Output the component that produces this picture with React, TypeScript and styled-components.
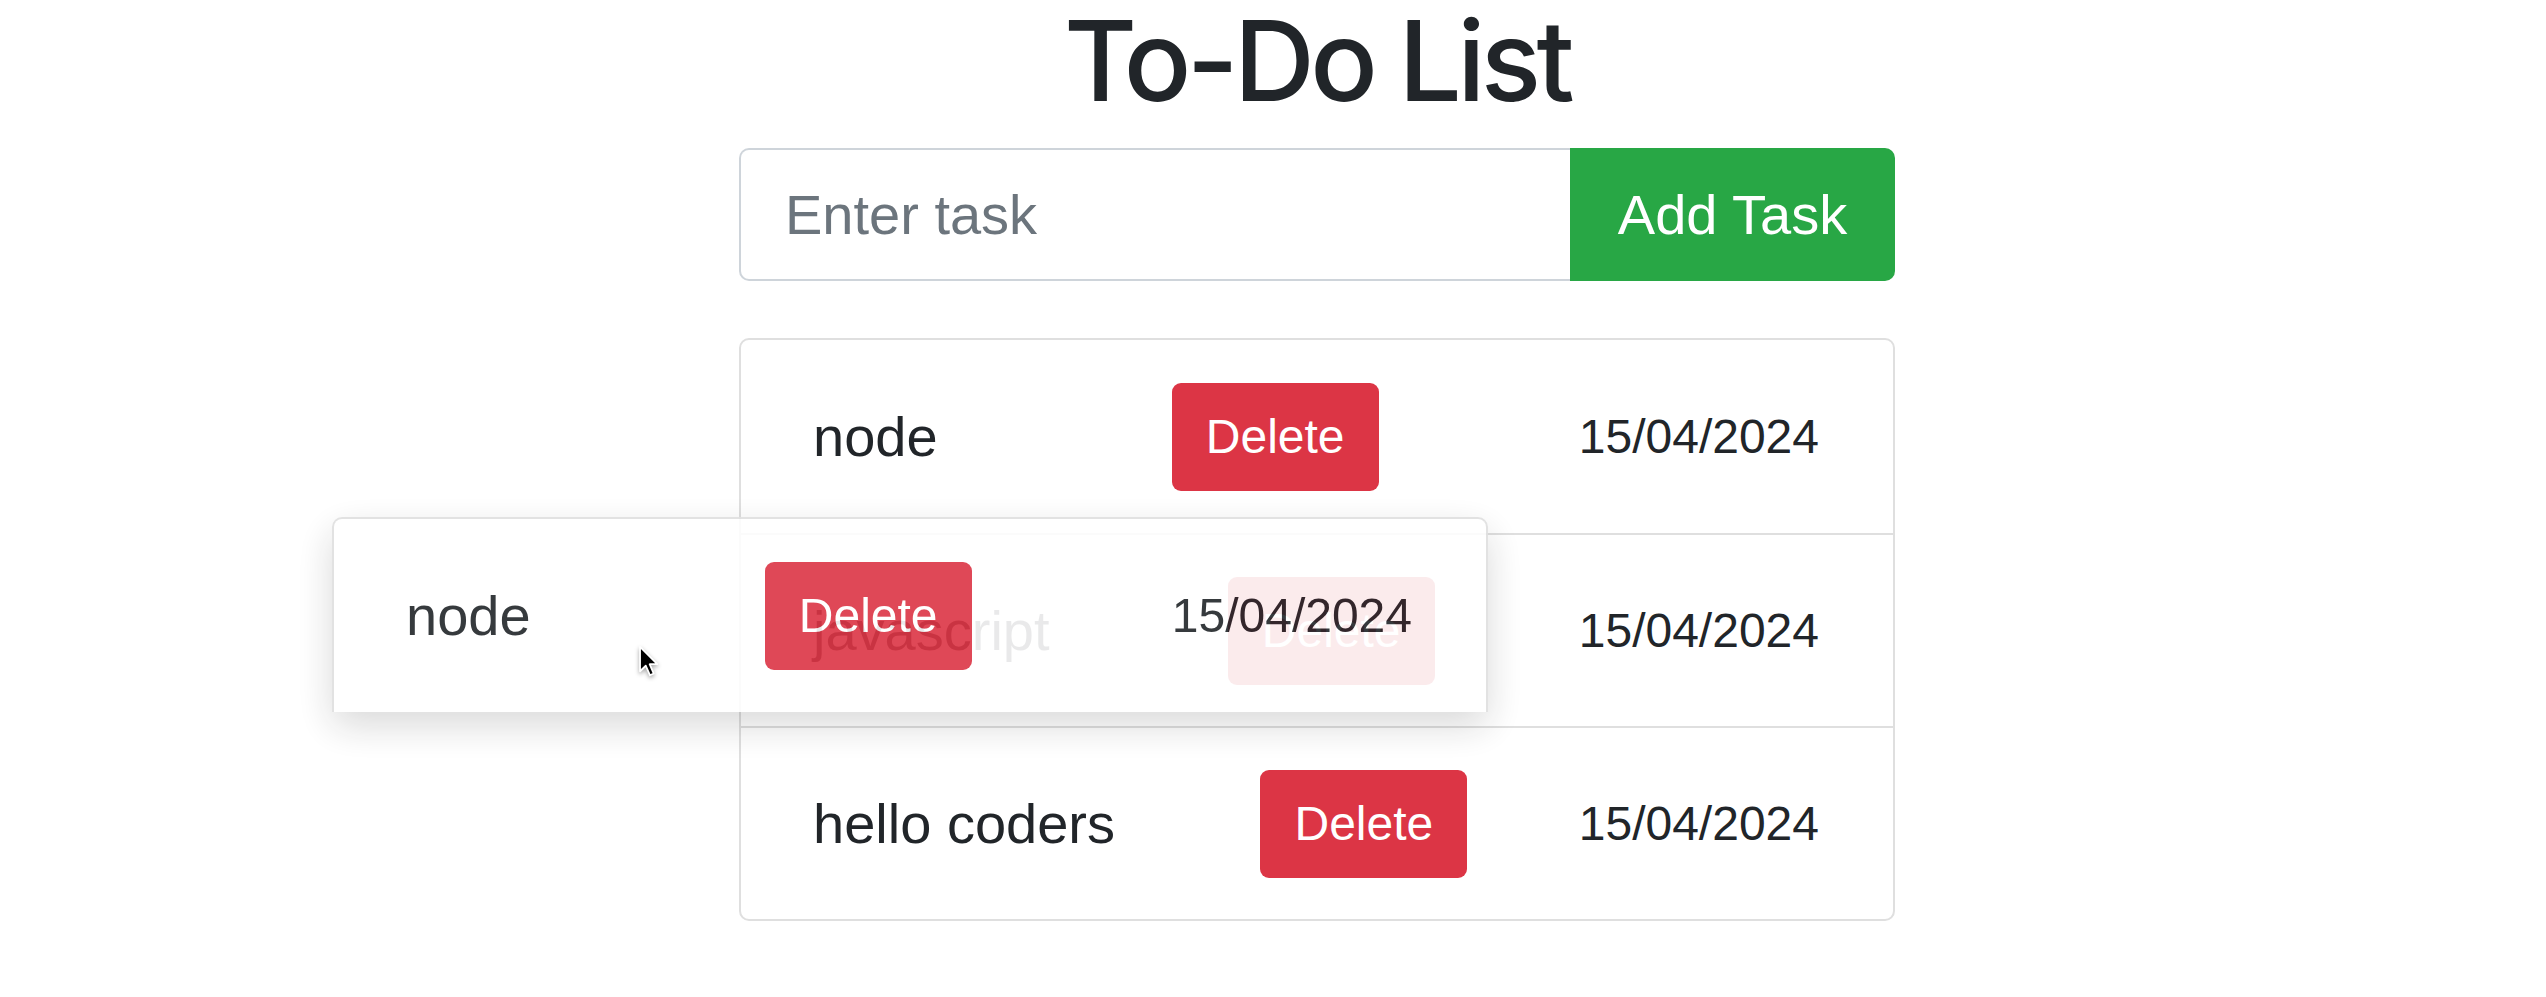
import React from "react";
import styled, { createGlobalStyle } from "styled-components";

interface TaskType {
  id: number;
  text: string;
  date: string;
}

const tasks: TaskType[] = [
  { id: 1, text: "node", date: "15/04/2024" },
  { id: 2, text: "javascript", date: "15/04/2024" },
  { id: 3, text: "hello coders", date: "15/04/2024" },
];

const GlobalStyle = createGlobalStyle`
  * {
    box-sizing: border-box;
  }
  body {
    margin: 0;
    background: #ffffff;
    color: #212529;
    font-family: "Liberation Sans", Arial, sans-serif;
  }
`;

const Page = styled.div`
  position: relative;
  min-height: 997px;
  overflow: hidden;
`;

const Container = styled.div`
  width: 1156px;
  margin-left: 739px;
  display: flex;
  flex-direction: column;
`;

const Title = styled.h1`
  margin: 0;
  padding-top: 4px;
  font-family: Inter, "Liberation Sans", sans-serif;
  font-size: 112px;
  line-height: 112px;
  font-weight: 500;
  letter-spacing: -4.6px;
  text-align: center;
  color: #212529;
`;

// 입력창 + 추가 버튼
const InputGroup = styled.div`
  display: flex;
  height: 133px;
  margin-top: 32px;
`;

const TaskInput = styled.input`
  flex: 1;
  height: 100%;
  padding: 0 44px;
  border: 2px solid #ced4da;
  border-right: none;
  border-radius: 10px 0 0 10px;
  font-family: inherit;
  font-size: 56px;
  color: #495057;
  outline: none;

  &::placeholder {
    color: #6c757d;
  }
`;

const AddButton = styled.button`
  width: 325px;
  height: 100%;
  border: none;
  border-radius: 0 10px 10px 0;
  background-color: #28a745;
  color: #ffffff;
  font-family: inherit;
  font-size: 56px;
`;

const List = styled.ul`
  list-style: none;
  margin: 57px 0 0;
  padding: 0;
  border: 2px solid #dfdfdf;
  border-radius: 10px;
`;

const Item = styled.li`
  display: flex;
  align-items: center;
  justify-content: space-between;
  height: 193px;
  padding: 0 74px 0 72px;

  & + & {
    border-top: 2px solid #dfdfdf;
  }
`;

const TaskText = styled.span`
  font-size: 56px;
  color: #212529;
`;

const DeleteButton = styled.button`
  margin-left: 34px;
  padding: 18px 34px;
  border: none;
  border-radius: 9px;
  background-color: #dc3545;
  color: #ffffff;
  font-family: inherit;
  font-size: 48px;
  line-height: 72px;
`;

const DateText = styled.span`
  font-size: 48px;
  color: #212529;
`;

// 드래그 중인 아이템 미리보기
const DragPreview = styled.div`
  position: absolute;
  left: 332px;
  top: 517px;
  width: 1156px;
  opacity: 0.9;
  background: #ffffff;
  border: 2px solid #dfdfdf;
  border-bottom: none;
  border-radius: 10px 10px 0 0;
  box-shadow: 0 14px 38px rgba(0, 0, 0, 0.17);
`;

const Cursor = styled.svg`
  position: absolute;
  left: 638px;
  top: 645px;
  width: 22px;
  height: 32px;
  filter: drop-shadow(0 2px 2px rgba(0, 0, 0, 0.35));
`;

const TaskRow: React.FC<{ task: TaskType }> = ({ task }) => (
  <>
    <TaskText>{task.text}</TaskText>
    <DeleteButton type="button">Delete</DeleteButton>
    <DateText>{task.date}</DateText>
  </>
);

const App: React.FC = () => {
  const dragging = tasks[0];

  return (
    <>
      <GlobalStyle />
      <Page>
        <Container>
          <Title>To-Do List</Title>

          <InputGroup>
            <TaskInput type="text" placeholder="Enter task" />
            <AddButton type="button">Add Task</AddButton>
          </InputGroup>

          <List>
            {tasks.map((task) => (
              <Item key={task.id}>
                <TaskRow task={task} />
              </Item>
            ))}
          </List>
        </Container>

        <DragPreview>
          <Item as="div">
            <TaskRow task={dragging} />
          </Item>
        </DragPreview>

        <Cursor viewBox="0 0 17 25">
          <path
            d="M1.5 1.5 V20.5 L6 16.2 L9.2 23.6 L12.2 22.3 L9 15 H15 Z"
            fill="#000000"
            stroke="#ffffff"
            strokeWidth="1.4"
            strokeLinejoin="round"
          />
        </Cursor>
      </Page>
    </>
  );
};

export default App;
